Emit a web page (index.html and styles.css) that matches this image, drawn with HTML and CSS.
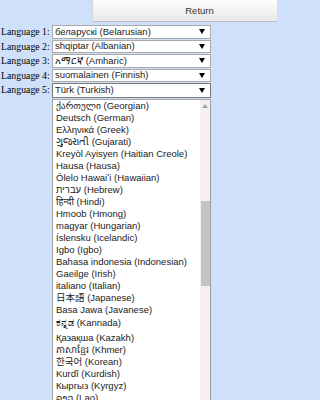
FILE: index.html
```html
<!DOCTYPE html>
<html>
<head>
<meta charset="utf-8">
<link rel="stylesheet" href="styles.css">
</head>
<body>
<div class="top"><button class="return">Return</button></div>
<div class="form">
  <span class="lbl">Language 1:</span>
  <div class="sel"><span class="val">беларускі (Belarusian)</span><svg class="arr" width="6" height="5" viewBox="0 0 6 5"><path d="M0 0H6L3 5Z" fill="#000"/></svg></div>
  <span class="lbl">Language 2:</span>
  <div class="sel"><span class="val">shqiptar (Albanian)</span><svg class="arr" width="6" height="5" viewBox="0 0 6 5"><path d="M0 0H6L3 5Z" fill="#000"/></svg></div>
  <span class="lbl">Language 3:</span>
  <div class="sel"><span class="val">አማርኛ (Amharic)</span><svg class="arr" width="6" height="5" viewBox="0 0 6 5"><path d="M0 0H6L3 5Z" fill="#000"/></svg></div>
  <span class="lbl">Language 4:</span>
  <div class="sel"><span class="val">suomalainen (Finnish)</span><svg class="arr" width="6" height="5" viewBox="0 0 6 5"><path d="M0 0H6L3 5Z" fill="#000"/></svg></div>
  <span class="lbl">Language 5:</span>
  <div class="sel open"><span class="val">Türk (Turkish)</span><svg class="arr" width="6" height="5" viewBox="0 0 6 5"><path d="M0 0H6L3 5Z" fill="#000"/></svg></div>
  <span class="lbl"></span>
  <div class="list">
    <div class="items">
      <div class="it">ქართული (Georgian)</div>
      <div class="it">Deutsch (German)</div>
      <div class="it">Ελληνικά (Greek)</div>
      <div class="it">ગુજરાતી (Gujarati)</div>
      <div class="it">Kreyòl Ayisyen (Haitian Creole)</div>
      <div class="it">Hausa (Hausa)</div>
      <div class="it">Ōlelo Hawaiʻi (Hawaiian)</div>
      <div class="it">עברית (Hebrew)</div>
      <div class="it">हिन्दी (Hindi)</div>
      <div class="it">Hmoob (Hmong)</div>
      <div class="it">magyar (Hungarian)</div>
      <div class="it">Íslensku (Icelandic)</div>
      <div class="it">Igbo (Igbo)</div>
      <div class="it">Bahasa indonesia (Indonesian)</div>
      <div class="it">Gaeilge (Irish)</div>
      <div class="it">italiano (Italian)</div>
      <div class="it">日本語 (Japanese)</div>
      <div class="it">Basa Jawa (Javanese)</div>
      <div class="it tall">ಕನ್ನಡ (Kannada)</div>
      <div class="it">Қазақша (Kazakh)</div>
      <div class="it">ភាសាខ្មែរ (Khmer)</div>
      <div class="it">한국어 (Korean)</div>
      <div class="it">Kurdî (Kurdish)</div>
      <div class="it">Кыргыз (Kyrgyz)</div>
      <div class="it">ລາວ (Lao)</div>
    </div>
    <div class="sb">
      <div class="up"><svg width="6" height="4" viewBox="0 0 6 4"><path d="M0 4H6L3 0Z" fill="#a0a0a0"/></svg></div>
      <div class="thumb"></div>
    </div>
  </div>
</div>
</body>
</html>
```

FILE: styles.css
```css
html, body {
  margin: 0;
  padding: 0;
  overflow: hidden;
}
body {
  background: #cfe0fb;
  width: 277px;
  height: 400px;
}
.top {
  display: flex;
  height: 22px;
  width: 277px;
}
.return {
  margin-left: 92px;
  flex: 0 0 185px;
  height: 22px;
  box-sizing: border-box;
  border: none;
  border-left: 1px solid #d4d4d4;
  border-bottom: 1px solid #bdbdbd;
  background: linear-gradient(#fdfdfd, #e9e9e9);
  font-family: "Liberation Sans", Arial, sans-serif;
  font-size: 9.5px;
  color: #333;
  padding: 0 0 0 29px;
}
.form {
  display: grid;
  grid-template-columns: 52px 159px;
  grid-auto-rows: 14.5px;
  margin-top: 3px;
  height: 375px;
  overflow: hidden;
}
.lbl {
  font-family: "Liberation Serif", "Times New Roman", serif;
  font-size: 9.8px;
  line-height: 14px;
  padding-left: 1px;
  white-space: nowrap;
  color: #000;
}
.sel {
  box-sizing: border-box;
  height: 13.5px;
  background: #fff;
  border: 1px solid #a9a9a9;
  display: flex;
  align-items: center;
  justify-content: space-between;
  padding: 0 5px 0 2px;
  font-family: "Liberation Sans", Arial, "DejaVu Sans", sans-serif;
  font-size: 9.5px;
  color: #222;
  overflow: hidden;
}
.sel.open {
  height: 14.5px;
  border-color: #7a7a7a;
}
.val {
  white-space: nowrap;
  line-height: 12px;
}
.arr {
  flex: 0 0 auto;
}
.list {
  grid-row: span 20;
  box-sizing: border-box;
  height: 302px;
  margin-top: 1.5px;
  background: #fff;
  border: 1px solid #a4a4a4;
  border-right-color: #9c9cab;
  border-bottom: none;
  display: flex;
  overflow: hidden;
}
.items {
  flex: 1;
  min-width: 0;
  padding-left: 3px;
  font-family: "Liberation Sans", Arial, "DejaVu Sans", "Noto Sans", "Noto Sans CJK JP", sans-serif;
  font-size: 9.5px;
  color: #222;
}
.it {
  height: 12px;
  line-height: 12px;
  white-space: nowrap;
}
.it.tall {
  height: 16px;
  line-height: 13px;
}
.sb {
  flex: 0 0 10px;
  background: #f6f0f3;
  display: flex;
  flex-direction: column;
  align-items: center;
}
.up {
  height: 10px;
  display: flex;
  align-items: center;
  justify-content: center;
  margin-top: 1px;
}
.thumb {
  width: 9px;
  height: 85px;
  margin-top: 90px;
  background: #c4c4c4;
}
```
